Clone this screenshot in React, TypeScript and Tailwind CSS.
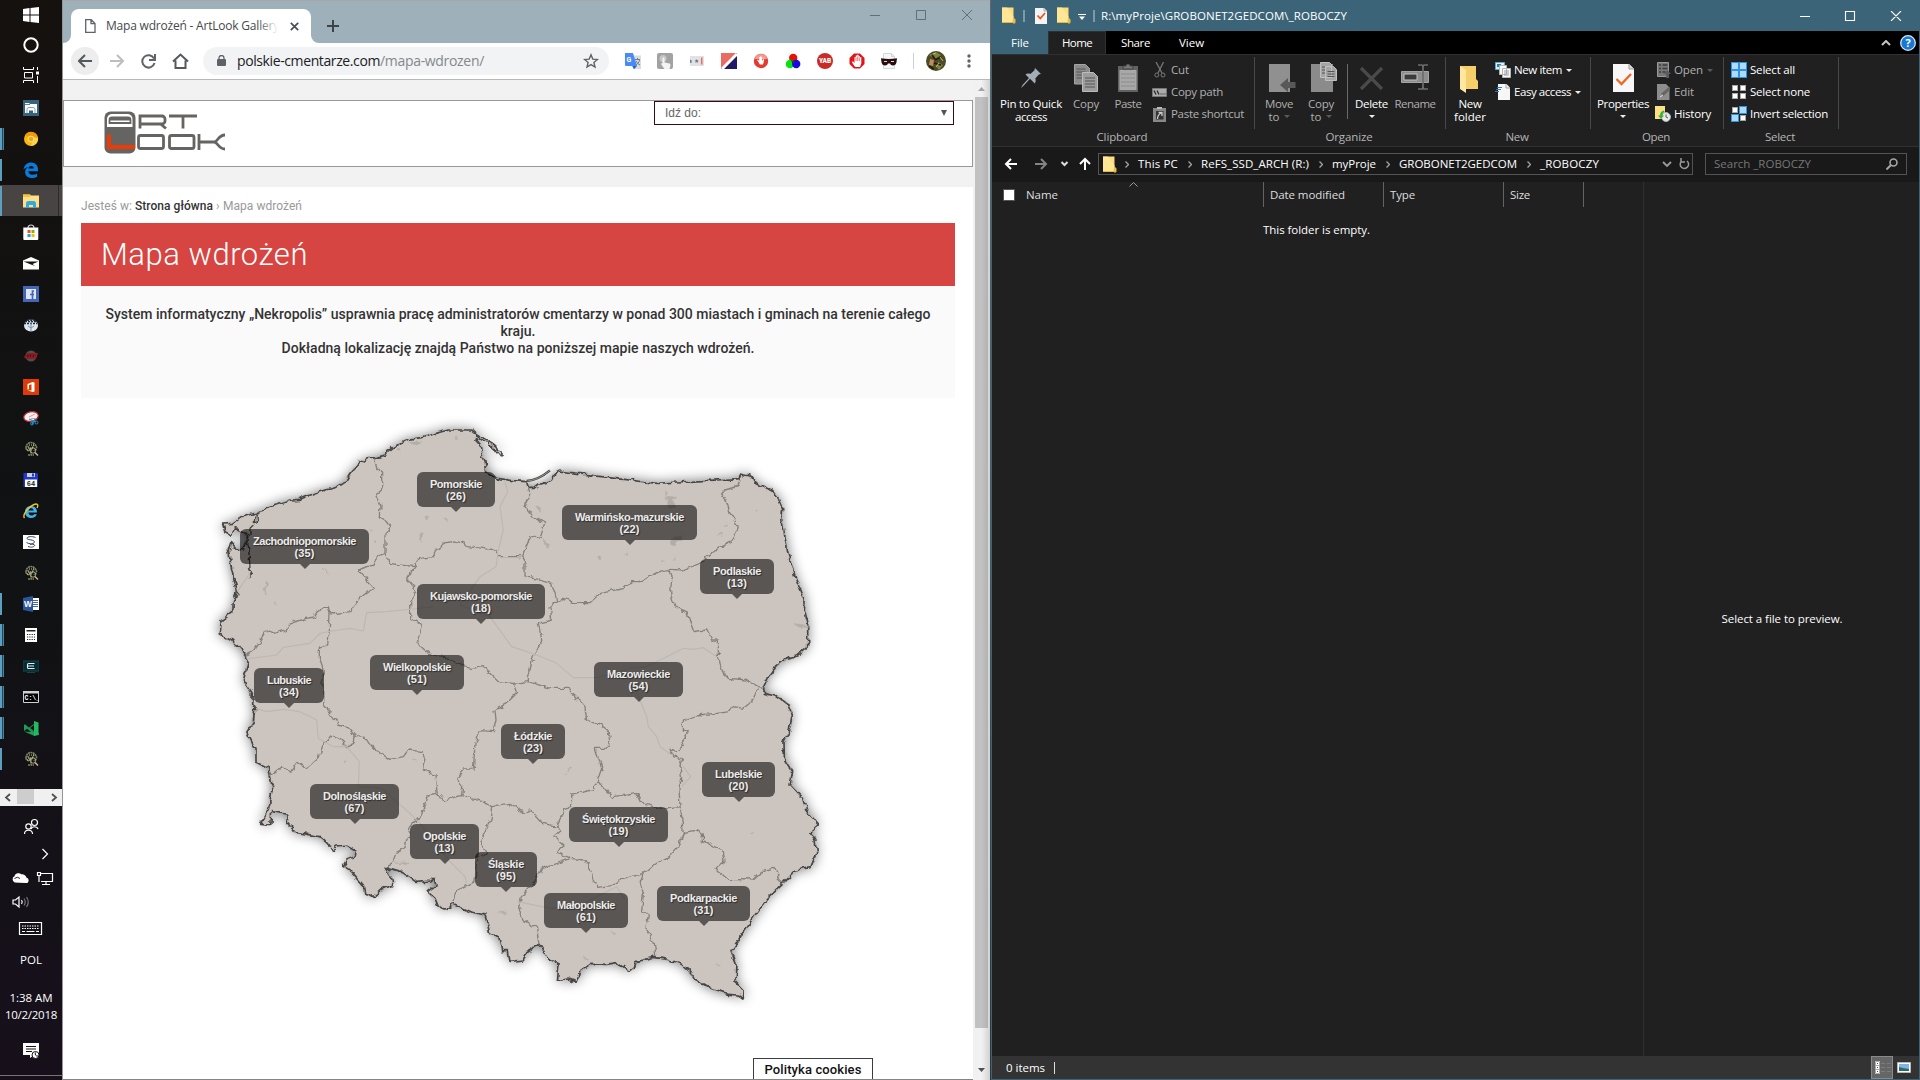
import { useLayoutEffect, useRef, type ReactNode } from "react";

/* Text whose tracking is adjusted so that it spans exactly `w` pixels. */
function Fit({ w, children, className = "" }: { w: number; children: string; className?: string }) {
  const ref = useRef<HTMLSpanElement>(null);
  useLayoutEffect(() => {
    const el = ref.current;
    if (!el) return;
    el.style.letterSpacing = "0px";
    const natural = el.getBoundingClientRect().width;
    el.style.letterSpacing = `${(w - natural) / children.length}px`;
  }, [w, children]);
  return (
    <span ref={ref} className={`inline-block whitespace-pre ${className}`}>
      {children}
    </span>
  );
}

/* ------------------------------------------------------------------ */
/* Taskbar                                                             */
/* ------------------------------------------------------------------ */

function Svg({ s = 16, children, className = "" }: { s?: number; children: ReactNode; className?: string }) {
  return (
    <svg width={s} height={s} viewBox="0 0 16 16" className={`block shrink-0 ${className}`} fill="none">
      {children}
    </svg>
  );
}

const TreeIcon = () => (
  <Svg>
    <path d="M3 7C3 3 6 1.500 8 1.500s6 2 5.500 6c-1 2-2 1.500-2.500 2.500M3 7c0 2 2 3 4 2.500M4.500 5l3.500 4 3-5M8 8v5.500M5 14h6" stroke="#7f8560" strokeWidth="1.600" strokeDasharray="2 .5" />
    <path d="M5 7h5M6 4h5M4 9h3" stroke="#d8cfa4" strokeWidth="1" strokeDasharray="1 1" />
    <circle cx="10" cy="9.500" r="2.700" stroke="#b4b294" strokeWidth=".9" />
    <path d="M12 11.500l3 3" stroke="#d2b08c" strokeWidth="1.500" />
  </Svg>
);

const taskIcons: { icon: ReactNode; run?: 1 | 2; active?: boolean }[] = [
  {
    icon: (
      <Svg>
        <path d="M0 0h16v16H0z" fill="#36647c" />
        <path d="M2 3.500V3h4l1 1h7v9H2z" fill="#fff" />
        <path d="M2 4.500h5" stroke="#36647c" strokeWidth=".8" />
        <path d="M4 13V9.500a2 2 0 0 1 2-2h4a2 2 0 0 1 2 2V13" stroke="#7ba4b8" />
        <path d="M6 13v-2.500h4V13z" fill="#36647c" />
      </Svg>
    ),
  },
  {
    run: 2,
    icon: (
      <Svg>
        <circle cx="8" cy="8" r="7" fill="#f8b70c" />
        <path d="M8 8L2 4.300A7 7 0 0 1 15 7z" fill="#f29a05" />
        <path d="M8 15a7 7 0 0 0 7-8l-5-1z" fill="#ffd04a" />
        <circle cx="8" cy="8" r="3.300" fill="#ffdf7e" />
        <circle cx="8" cy="8" r="2.300" fill="#eda51c" />
      </Svg>
    ),
  },
  {
    run: 1,
    icon: (
      <Svg>
        <path d="M.5 7.500C1.200 3 4.300.5 8 .5c4.500 0 7 3 7 7V9.200H5.300c.2 2.500 2.200 3.600 4.500 3.600 1.700 0 3-.4 4.300-1.200v3.200c-1.500.9-3.200 1.200-5 1.200-4.300 0-7-2.300-7-6 0-2.200 1.200-4 3.200-5C3.800 5.200 2 5.800.5 7.500zM5.400 6.500h5.400C10.800 4.800 9.900 4 8.200 4 6.700 4 5.700 5 5.400 6.500z" fill="#0a7bdb" />
      </Svg>
    ),
  },
  {
    run: 1,
    active: true,
    icon: (
      <Svg>
        <path d="M0 1.500h7l1 1h8v12H0z" fill="#ffe08a" />
        <path d="M0 1.500h6.500L8 3 6.500 4H0z" fill="#f4c430" />
        <path d="M3 15V10.500A2.500 2.500 0 0 1 5.500 8h5A2.500 2.500 0 0 1 13 10.500V15h-3v-3H6v3z" fill="#30aadf" />
      </Svg>
    ),
  },
  {
    icon: (
      <Svg>
        <path d="M5 4c0-4 6-4 6 0" stroke="#cfcfcf" strokeWidth="1.200" />
        <path d="M.3 3.500h15V15a1 1 0 0 1-1 1h-13a1 1 0 0 1-1-1z" fill="#fff" />
        <path d="M4.500 6H7.500v3h-3z" fill="#f04e23" />
        <path d="M8.500 6h3v3h-3z" fill="#7fba00" />
        <path d="M4.500 10h3v3h-3z" fill="#0aa4ef" />
        <path d="M8.500 10h3v3h-3z" fill="#ffb900" />
      </Svg>
    ),
  },
  {
    icon: (
      <Svg>
        <path d="M0 5.500L8 2l8 3.500V14.500H0z" fill="#fff" />
        <path d="M.5 6.500h15l-6 2.500L12 11 8 9.500z" fill="#141414" />
      </Svg>
    ),
  },
  {
    icon: (
      <Svg>
        <path d="M0 0h16v16H0z" fill="#4566b4" />
        <path d="M3 3h10v10H3z" fill="#dfe6f5" />
        <path d="M11 5H9.500v8M7 8.500h4" stroke="#4566b4" strokeWidth="1.700" />
      </Svg>
    ),
  },
  {
    icon: (
      <Svg>
        <ellipse cx="8" cy="8.500" rx="7" ry="6" fill="#dfe7ee" />
        <path d="M1 6.500h13M2 4.500h12M4 3h8" stroke="#1b2b3b" strokeWidth="1.300" strokeDasharray="2 1" />
        <path d="M8 6v8M5 9l3 2 3-2" stroke="#7a92ab" />
      </Svg>
    ),
  },
  {
    icon: (
      <Svg>
        <circle cx="8" cy="8" r="5.500" fill="#4a5050" />
        <path d="M1 9l3-4h11l-2 6H3z" fill="#8e1c22" />
        <path d="M4 9l2-2.500M7 9l1-2.500M10 9l1-2.500" stroke="#4c1214" strokeWidth="1.200" />
      </Svg>
    ),
  },
  {
    icon: (
      <Svg>
        <path d="M0 0h16v16H0z" fill="#dc3b05" />
        <path d="M4.500 5l5-2 2 .6v8.800l-2 .6-5-1.700 4 .3V5.300l-2.500.6v4l-1.500.8z" fill="#fff" />
      </Svg>
    ),
  },
  {
    icon: (
      <Svg>
        <ellipse cx="8" cy="6.500" rx="7.300" ry="4.800" fill="#f2f2f2" stroke="#c2282d" strokeWidth="1.200" transform="rotate(-12 8 6.500)" />
        <path d="M6 7l6-3M8 8.500h5" stroke="#d99" />
        <path d="M6 9l7 3M9 14l3-5" stroke="#2d8fc9" strokeWidth="1.300" />
        <circle cx="9" cy="13.500" r="1.500" stroke="#2d8fc9" />
        <circle cx="13.500" cy="12.500" r="1.500" stroke="#2d8fc9" />
      </Svg>
    ),
  },
  { icon: <TreeIcon /> },
  {
    icon: (
      <Svg>
        <path d="M.5 1h13.500l1 1v13H.5z" fill="#2339c6" />
        <path d="M4 1h8v4H4z" fill="#c8cde8" />
        <path d="M9 1.500h2v3H9z" fill="#2339c6" />
        <path d="M2 7.500h12V15H2z" fill="#fff" />
        <text x="8" y="13.700" fontSize="7" fontWeight="700" fontFamily="Liberation Mono" textAnchor="middle" fill="#222">64</text>
      </Svg>
    ),
  },
  {
    icon: (
      <Svg>
        <path d="M2 9C2 5 4.500 3 8 3s6 2 6 6.500H5.500c0 2 1.300 3 3 3 1.200 0 2-.5 2.500-1.300h2.800C13 13.700 11 15 8.300 15 4.500 15 2 12.500 2 9zm3.600-1.500h5C10.500 6 9.500 5.300 8.200 5.300S5.900 6 5.600 7.500z" fill="#45b2ea" />
        <path d="M1.500 15C-1 12 5 4 11 1.500c3-1.200 5 0 3 3.500" stroke="#f5c21e" strokeWidth="1.400" />
      </Svg>
    ),
  },
  {
    icon: (
      <Svg>
        <path d="M0 1h16v14H0z" fill="#fff" />
        <path d="M12.500 3.500C9 2 4.500 2.500 4 4.200 3.500 6 9.500 5.500 11 7s-1 3-4 3.500M3.500 8.500C5 10 10 9.500 11.500 11c1 1.500-3 3-6.500 1.500" stroke="#2d4766" />
      </Svg>
    ),
  },
  { icon: <TreeIcon /> },
  {
    run: 1,
    icon: (
      <Svg>
        <path d="M8 2h8v12H8z" fill="#fff" />
        <path d="M10 4.500h5M10 6.500h5M10 8.500h5M10 10.500h5" stroke="#2b579a" strokeWidth=".9" />
        <path d="M0 2l10-2v16L0 14z" fill="#2b579a" />
        <text x="5" y="11" fontSize="8.500" fontWeight="700" fontFamily="Liberation Sans" textAnchor="middle" fill="#fff">W</text>
      </Svg>
    ),
  },
  {
    run: 2,
    icon: (
      <Svg>
        <path d="M2 1h12v14H2z" fill="#fff" />
        <path d="M3.500 3h9v1.500h-9z" fill="#222" />
        <path d="M4 7.500h8M4 10h8M4 12.500h8" stroke="#222" strokeWidth="1.200" strokeDasharray="1.200 1.100" />
      </Svg>
    ),
  },
  {
    run: 2,
    icon: (
      <Svg>
        <path d="M0 3h16v10H0z" fill="#082c33" stroke="#134650" strokeWidth="1" />
        <path d="M11.500 5.500h-6A1 1 0 0 0 4.500 6.500v3a1 1 0 0 0 1 1h6M5 8h6" stroke="#dfeef0" strokeWidth="1.100" />
        <path d="M4 14.500h8" stroke="#134650" />
      </Svg>
    ),
  },
  {
    run: 2,
    icon: (
      <Svg>
        <path d="M.5 2.500h15v11H.5z" fill="#000" stroke="#cfcfcf" />
        <path d="M0 2h16v2.500H0z" fill="#cfcfcf" />
        <text x="1.500" y="11" fontSize="6.500" fontWeight="700" fontFamily="Liberation Mono" fill="#fff">C:\_</text>
      </Svg>
    ),
  },
  {
    run: 2,
    icon: (
      <Svg>
        <path d="M1 5l1-.7 9.500 8.200L16 13v2L11.500 16 1 11.500l7 .5-7-6z" fill="#1f9d55" />
        <path d="M11 1l4.500 1.500V14L11 16z" fill="#26b763" />
        <path d="M1 5l4 3-4 3zM11 4v8L5.500 8z" fill="#1f9d55" />
        <path d="M11 5v6L7 8z" fill="#12161a" />
      </Svg>
    ),
  },
  { run: 1, icon: <TreeIcon /> },
];

function Taskbar() {
  return (
    <div className="flex h-full w-[63px] shrink-0 flex-col border-r border-[#969696] bg-gradient-to-b from-[#15110f] via-[#101213] to-[#17101b] font-['Open_Sans',sans-serif] text-white">
      <div className="flex h-[92px] flex-col items-center">
        <div className="flex h-[30px] items-center">
          <Svg>
            <path d="M0 2l6.500-1v6.500H0zM7.500.9L16 0v7.500H7.500zM0 8.500h6.500V15L0 14zM7.500 8.500H16V16l-8.500-1z" fill="#fff" />
          </Svg>
        </div>
        <div className="flex h-[30px] items-center">
          <Svg>
            <circle cx="8" cy="8" r="6.700" stroke="#fff" strokeWidth="2" />
          </Svg>
        </div>
        <div className="flex h-[29px] items-center">
          <Svg>
            <path d="M.5 0v2.500h10V0M.5 16v-2.500h10V16M1.500 5.500h8v5.500h-8zM14.500 0v3M14.500 9v7" stroke="#fff" />
            <path d="M13 4.500h3V7.500h-3z" fill="#fff" />
          </Svg>
        </div>
      </div>
      {taskIcons.map((t, i) => (
        <div key={i} className={t.active ? "flex h-[31px] items-center bg-[#484444]" : "flex h-[31px] items-center"}>
          <div className="flex w-[23px]">
            {t.run && <div className={t.active ? "h-[30px] w-[2px] bg-[#5c9fc0]" : "h-[22px] w-[2px] bg-[#5c9fc0]"} />}
            {t.run === 2 && <div className="h-[22px] w-[2px] border-l border-[#24475a] bg-[#4d809a]" />}
          </div>
          {t.icon}
          {t.active && <div className="ml-[19px] h-[31px] w-px bg-[#2e2b2b]" />}
        </div>
      ))}
      <div className="mt-[15px] flex h-[17px] items-center bg-[#f0f0f0]">
        <svg width="62" height="17" fill="none">
          <path d="M17 0h17v15H17z" fill="#cdcdcd" />
          <path d="M10 5L6 8.500l4 3.500M52 5l4 3.500-4 3.500" stroke="#505050" strokeWidth="1.800" />
        </svg>
      </div>
      <svg width="62" height="140" viewBox="0 806 62 140" fill="none" stroke="#fff" strokeWidth="1.200">
        <circle cx="34.500" cy="822.500" r="3" />
        <path d="M31 829c1-3 6-3 7 0" />
        <circle cx="28.500" cy="826.500" r="2.700" />
        <path d="M24.500 834c0-5 8-5 8 0" />
        <path d="M42.500 849l5 5-5 5" />
        <path d="M15 882a3 3 0 0 1 0-5.500 3.500 3.500 0 0 1 6-1.500 4 4 0 0 1 5 3 2.500 2.500 0 0 1 1 4.500z" fill="#fff" />
        <path d="M14.500 878.500q3-2.500 5.500 0" stroke="#111" strokeWidth=".9" />
        <path d="M41 873.500h11.500v8H41M46 881.500v3M42 884.500h8M37.500 872.500h3v3h-3zM39 876v6" />
        <path d="M13 900h2.500l3.500-3v10l-3.500-3H13z" />
        <path d="M21.500 900q1.500 2 0 4" />
        <path d="M24 898.500q2.500 3.500 0 7M26.500 897q3.500 5 0 10" stroke="#777" />
        <path d="M19.500 922.500h22v12h-22z" />
        <path d="M22 926h17M22 928.500h17" strokeDasharray="1.500 1" />
        <path d="M22 931.500h3M26.500 931.500h8M36 931.500h3" />
      </svg>
      <div className="flex flex-col items-center text-[11.5px] leading-[17px]">
        <div className="mt-[5px] h-[17px]"><Fit w={22}>POL</Fit></div>
        <div className="mt-[21px] h-[17px]"><Fit w={43}>1:38 AM</Fit></div>
        <div className="h-[17px]"><Fit w={52}>10/2/2018</Fit></div>
        <Svg className="mt-[20px]">
          <path d="M0 0h16v12h-5l-4 3v-3H0z" fill="#fff" />
          <path d="M3 3.500h10M3 6h10M3 8.500h6" stroke="#151515" />
          <circle cx="12.500" cy="12" r="3.500" fill="#fff" stroke="#151515" />
          <path d="M12.500 9.500c-1 2 .5 4 2.500 3.500" stroke="#151515" />
        </Svg>
      </div>
      <div className="mt-auto mb-[4px] h-px bg-[#77747a]" />
    </div>
  );
}

/* ------------------------------------------------------------------ */
/* Map of Poland (drawn at three units per pixel)                      */
/* ------------------------------------------------------------------ */

const outline =
  "M68 342L100 340 120 325 178 305 225 285 270 270 300 268 345 250 375 240 410 232 435 215 452 190 475 165 500 147 530 142 555 135 580 112 625 88 670 82 700 72 745 60 815 60 830 72 870 96 893 116 906 133 898 137 885 120 860 98 830 80 828 92 840 105 845 130 855 150 860 185 878 195 890 205 935 212 980 215 985 235 1005 235 1020 222 1055 212 1068 187 1080 183 1130 190 1225 203 1270 208 1345 217 1375 220 1430 216 1530 211 1618 206 1622 192 1650 198 1665 220 1695 235 1715 242 1735 265 1748 295 1745 330 1755 380 1765 435 1785 500 1815 570 1813 600 1823 635 1823 710 1790 738 1760 745 1730 768 1705 800 1690 832 1693 850 1725 858 1765 885 1777 915 1768 960 1752 995 1753 1045 1778 1085 1770 1122 1810 1165 1820 1200 1855 1245 1830 1265 1845 1290 1850 1330 1833 1373 1785 1380 1750 1418 1700 1465 1645 1545 1593 1622 1608 1660 1605 1715 1632 1742 1633 1767 1615 1755 1585 1753 1540 1740 1480 1705 1470 1685 1445 1663 1405 1648 1360 1642 1310 1655 1302 1672 1285 1683 1250 1658 1220 1663 1175 1660 1140 1685 1128 1717 1105 1707 1072 1712 1077 1660 1045 1645 1017 1603 980 1625 970 1653 930 1657 925 1622 905 1622 897 1580 870 1572 855 1515 810 1505 760 1482 735 1500 715 1490 705 1465 682 1445 708 1425 702 1402 690 1413 650 1417 605 1385 553 1370 575 1405 578 1427 545 1437 518 1463 495 1450 490 1425 455 1385 430 1367 440 1350 465 1340 470 1322 440 1305 410 1308 397 1320 385 1300 362 1280 285 1267 263 1240 260 1212 215 1205 212 1247 182 1243 205 1200 218 1130 205 1075 165 1055 165 1015 140 965 160 935 165 895 155 880 157 850 130 810 145 760 135 733 100 695 58 672 60 635 98 605 100 580 112 545 95 480 85 420 92 398 105 415 130 420 136 400 140 372 108 357 95 378 75 368Z";

const borders = [
  "M524 147L530 175 545 190 545 240 527 255 540 290 538 320 555 330 570 350 555 365 555 430 530 440 520 465 475 480 500 510 520 532 485 560 460 590 450 605 390 612 385 590 365 590 345 620 305 630 270 640 265 655 225 670 200 660 180 690 165 720 137 733",
  "M390 612L388 660 383 705 358 712 358 745 370 780 368 885 390 905 415 945 450 955 465 975 463 997 440 1010 420 990 392 975 365 1010 355 1042 320 1075 290 1055 270 1085 245 1072 210 1100",
  "M465 980L495 982 515 1012 570 1048 610 1040 625 1020 665 1025 678 1045 670 1080 705 1095 712 1153 725 1155 735 1172 782 1157 850 1175 875 1190 870 1230 850 1270 845 1300 862 1330 830 1345 825 1415 770 1440 762 1475",
  "M555 430L570 460 600 465 645 470 660 445 700 440 710 415 735 398 770 393 805 410 850 415 890 420 893 440 965 440 975 460 975 500 1000 505 1055 520 1068 560 1070 575",
  "M985 235L990 255 975 290 1000 320 1035 340 1020 385 990 378 970 430 965 440",
  "M645 470L620 508 650 545 632 570 632 625 665 645 650 690 665 715 690 735 740 740 790 770 815 775 850 770 895 815 940 820 985 815",
  "M1070 575L1090 565 1120 577 1170 578 1200 550 1270 535 1290 515 1320 515 1370 488 1405 478 1450 480 1500 460 1560 410 1600 390 1615 350 1590 310 1580 275 1562 255 1575 240 1615 228 1620 206",
  "M1070 575L1050 590 1055 630 1015 640 1025 690 1000 740 985 800 985 815 1050 835 1100 835 1125 855 1155 890 1160 935 1200 945 1225 965 1230 1000 1215 1015 1185 1015 1205 1075 1193 1110 1205 1125 1235 1160 1285 1155 1310 1150 1325 1180 1380 1195 1440 1190",
  "M1402 478L1415 510 1412 550 1425 590 1460 605 1480 665 1520 660 1535 690 1555 690 1555 740 1570 790 1585 805 1640 810 1675 830 1690 832",
  "M1675 835L1655 875 1630 895 1600 890 1590 905 1550 910 1490 915 1450 930 1450 960 1465 965 1445 990 1450 1010 1430 1025 1410 1015 1420 1040 1445 1045 1440 1070 1445 1110 1437 1130 1440 1190 1445 1220 1450 1270 1440 1300 1405 1340 1370 1360 1330 1390 1260 1410 1235 1430 1190 1435 1170 1380 1155 1350 1110 1345 1070 1360 1025 1375 1005 1420 985 1435 960 1465 955 1500 970 1530 1010 1555 1017 1603",
  "M940 820L950 850 920 880 885 900 888 930 880 965 840 962 825 1000 820 1080 790 1080 770 1105 785 1130 782 1157",
  "M712 1153L680 1158 665 1215 640 1240 620 1290 615 1315 590 1330 580 1355 553 1370",
  "M875 1190L930 1183 975 1210 990 1200 1025 1240 1068 1248 1080 1265 1063 1280 1092 1305 1075 1330 1110 1345",
  "M1193 1110L1180 1135 1115 1153 1115 1190 1095 1195 1068 1248",
  "M1330 1390L1320 1415 1330 1450 1325 1500 1345 1515 1338 1555 1350 1570 1365 1620 1367 1642",
  "M1450 1268L1490 1260 1510 1275 1510 1295 1570 1325 1575 1355 1545 1375 1580 1405 1660 1407 1690 1380 1725 1375 1735 1405 1750 1418",
].join("");

const rivers =
  "M915 215L923 245 900 290 910 360 895 420 888 470 840 500 780 585 870 620 935 710 1010 735 1070 760 1120 803 1190 803 1275 780 1320 870 1340 920 1345 950 1370 980 1380 1010 1415 1035M1290 775L1340 770 1400 740 1450 715 1480 718 1510 713 1550 740M168 895L200 905 250 898 300 905 350 930 355 985 400 1010 440 1010 478 1055 475 1130 545 1135 630 1210 660 1240 750 1355 795 1400 800 1420M140 747L230 735 250 712 330 700 360 670 395 663 450 655 490 663 500 608 560 605 640 597 700 590M955 1475L1050 1495 1140 1485 1250 1430 1275 1470M1450 1070L1472 1100 1445 1130M112 545L150 490";

const lakes =
  "M628 98l35-4-15 14zM765 80l4 10-6-2zM588 117l14 3-6 4zM1398 258l30 4-10 10 16 22-28 2zM1410 385l38-8-22 30-16-8zM1575 343l12 3-10 3zM1552 375l10-4 4 8-8-4zM1665 300l6-2v6zM510 360l10 2-8 3zM523 392l10 2-8 4zM470 152l10 2-8 2zM195 518l6-2-5 22 4 18-8-14zM366 474l22 16-14-8zM222 575l12 8-8-4zM896 1508l24-2-8 6zM585 1358l40 2-10 4zM430 1053l6 4-6 2zM638 1048l8 2-6 3zM1092 1092l20-20h4l-16 10zM1150 1640l16 10-8-4zM1552 1660l8 4-6 4zM1652 1270l10-6-6 8zM1235 1565l14 3-10 2zM1785 640l40 8-20 2zM1196 440l8 4-6 6zM1386 450l8 4-8 0zM1424 446l6 4-6 0zM1276 432l6-4v8zM660 370l8 4-4 24-4-10zM735 325l5 2-2 8zM680 318l8 2-6 4zM1008 290l14 4-2 14zM1026 385l22 20-4 14zM1395 245l8 3-5 5z";

const regions: [string, number, number, number, number, number][] = [
  ["Pomorskie", 26, 217, 62, 78, 52],
  ["Zachodniopomorskie", 35, 40, 119, 129, 103],
  ["Kujawsko-pomorskie", 18, 217, 174, 128, 102],
  ["Warmińsko-mazurskie", 22, 362, 95, 135, 109],
  ["Podlaskie", 13, 500, 149, 74, 48],
  ["Wielkopolskie", 51, 170, 245, 94, 68],
  ["Lubuskie", 34, 54, 258, 70, 44],
  ["Mazowieckie", 54, 394, 252, 89, 63],
  ["Łódzkie", 23, 301, 314, 64, 38],
  ["Lubelskie", 20, 502, 352, 73, 47],
  ["Dolnośląskie", 67, 110, 374, 89, 63],
  ["Opolskie", 13, 210, 414, 69, 43],
  ["Śląskie", 95, 275, 442, 62, 36],
  ["Świętokrzyskie", 19, 369, 397, 99, 73],
  ["Małopolskie", 61, 344, 483, 84, 58],
  ["Podkarpackie", 31, 457, 476, 93, 67],
];

function PolandMap() {
  return (
    <div className="relative ml-[137px] h-[610px] w-[640px]">
      <svg width="640" height="610" viewBox="0 0 1920 1830" fill="none" strokeLinejoin="round" className="block">
        <defs>
          <filter id="soft" x="-10%" y="-10%" width="120%" height="120%">
            <feGaussianBlur stdDeviation="19" />
          </filter>
          <filter id="rough" x="-2%" y="-2%" width="104%" height="104%" colorInterpolationFilters="sRGB">
            <feTurbulence type="fractalNoise" baseFrequency="0.045" numOctaves="2" seed="4" />
            <feDisplacementMap in="SourceGraphic" scale="20" xChannelSelector="R" yChannelSelector="G" />
          </filter>
        </defs>
        <path d={outline} fill="#000" opacity=".55" filter="url(#soft)" />
        <g filter="url(#rough)">
          <path d={outline} fill="#ccc5bf" stroke="#484644" strokeWidth="5" />
          <path d={lakes} fill="#b3ada7" stroke="#b3ada7" strokeWidth="1.500" />
          <path d={borders} stroke="#85817c" strokeWidth="4" />
          <path d="M178 308L165 320 163 338 173 335 170 318M160 345L150 355 150 370 142 385 140 405 146 425 148 440 150 475 145 480 158 488 148 495 152 503M105 353l10 2v6h-8z" stroke="#484644" strokeWidth="4" />
        </g>
        <path d={rivers} stroke="#bdb7b1" strokeWidth="3.500" />
        <path d="M980 213Q1015 210 1050 181" stroke="#44423f" strokeWidth="7" />
        <path d="M982 213Q1015 210 1050 181" stroke="#a9a39d" strokeWidth="2.500" />
      </svg>
      {regions.map(([name, n, x, y, w, tw]) => (
        <div
          key={name}
          style={{ left: x, top: y, width: w }}
          className="absolute flex h-[35px] flex-col items-center rounded-[6px] bg-[#000000]/56 pt-[6px] font-['Liberation_Sans',sans-serif] text-[11px] leading-[12px] font-bold text-[#ececec] [text-shadow:1px_1px_1px_rgba(0,0,0,0.5)]"
        >
          <Fit w={tw}>{name}</Fit>
          <Fit w={20}>{`(${n})`}</Fit>
          <span className="absolute top-[35px] h-0 w-0 border-x-[5px] border-t-[5px] border-x-transparent border-t-black/56" />
        </div>
      ))}
    </div>
  );
}

/* ------------------------------------------------------------------ */
/* Browser window                                                      */
/* ------------------------------------------------------------------ */

const extensions: ReactNode[] = [
  <Svg key="translate">
    <path d="M5 2.500h11V16H8z" fill="#dadce0" />
    <path d="M0 0h8l4 13-3 3-1.500-3H1a1 1 0 0 1-1-1z" fill="#4a8af4" />
    <path d="M7.500 13h4l-2.500 3z" fill="#2b5fc4" />
    <text x="1.600" y="9" fontSize="7" fontWeight="700" fontFamily="Roboto" fill="#fff">G</text>
    <path d="M10 6.500h5M12.500 5v1.500M14.500 7c-.5 2.500-2 4-3.500 5M11 8c1 2 2 3 4 4" stroke="#66818c" />
  </Svg>,
  <Svg key="touch">
    <rect width="16" height="16" rx="2" fill="#a2a2a2" />
    <circle cx="6" cy="5.500" r="3.500" fill="#c6c6c6" />
    <path d="M5.500 5.500c0-1.300 2-1.300 2 0v4l5 1c1 .3 1 1 .9 2L12.500 16h-5L4 11c0-1 1-1 1.500-.5z" fill="#f4f4f4" />
  </Svg>,
  <Svg key="pass">
    <path d="M1 3h14v10H1z" fill="#e2e2e2" />
    <path d="M1 6.700h1l.3 1h1l-.8.800.3 1.300H1zM7.700 6l.6 1.300 1.500.1-1.100 1 .3 1.500-1.300-.8-1.300.8.300-1.500-1.100-1 1.500-.1z" fill="#5f7f8d" />
    <path d="M12.700 4.500v7" stroke="#f1666a" strokeWidth="1.500" />
  </Svg>,
  <Svg key="flag">
    <path d="M0 0h16L0 16z" fill="#ea6b61" />
    <path d="M16 0v16H0z" fill="#201a66" />
    <path d="M16 1L1 16" stroke="#fff" strokeWidth="3" />
  </Svg>,
  <Svg key="hand">
    <circle cx="8" cy="8" r="7.200" fill="#e43a31" />
    <path d="M2 6a6 5 0 0 1 12 0z" fill="#f49a90" />
    <path d="M5.500 9L4 7l1-.5L6.200 8V4h1v3V3.300h1V7V4h1v4l1.300-2 .8.500L10 11.500H6.800z" fill="#fff" />
  </Svg>,
  <Svg key="rgb">
    <circle cx="8.200" cy="5" r="4.200" fill="#e51400" />
    <circle cx="5" cy="11" r="4.300" fill="#08e413" />
    <circle cx="11.200" cy="11" r="4.200" fill="#1809e2" />
    <path d="M5.500 7l2.700 1 2-.2-2 3z" fill="#145" />
  </Svg>,
  <Svg key="yab">
    <circle cx="8" cy="8" r="8" fill="#c82c25" />
    <text x="8" y="10.300" fontSize="6.500" fontWeight="900" fontFamily="Roboto" textAnchor="middle" fill="#fff">YAB</text>
  </Svg>,
  <Svg key="abp">
    <path d="M5 .5h6L15.500 5v6L11 15.500H5L.5 11V5z" fill="#e4131b" />
    <path d="M5.300 13L2.800 9l1.200-.8L5.500 10V4h1.300V2.600h1.400V1.800h1.400v1.400H11v1h1.300V10.500l-1.300 3.500H6.500z" fill="#fff" />
    <path d="M7 4.500V8M8.700 3.500V8M10.300 4.500V8" stroke="#e4131b" strokeWidth=".6" />
  </Svg>,
  <Svg key="mask">
    <path d="M2.500.5H10.500l3 3v12H2.500z" fill="#f4f6f7" stroke="#d3d8dc" />
    <path d="M10.500.5v3h3" stroke="#cfd4d8" />
    <path d="M0 5.200q8 1.600 16 0l-.5 4q-.8 3.300-3.500 3.300-2.500 0-3-2H7q-.5 2-3 2-2.700 0-3.500-3.300z" fill="#2a0d10" />
    <path d="M3 8.500h3M10 8.500h3" stroke="#e9dada" strokeWidth="1.200" />
  </Svg>,
];

function Browser() {
  return (
    <div className="flex h-full w-[927px] shrink-0 flex-col bg-white">
      <div className="flex h-[43px] shrink-0 border-t border-[#a8a6a8] bg-[#9eb1ba]">
        <div className="relative mt-[8px] ml-[8px] flex h-[34px] w-[240px] items-center rounded-t-[8px] bg-white">
          <svg width="8" height="8" className="absolute bottom-0 -left-[8px]"><path d="M8 0v8H0a8 8 0 0 0 8-8z" fill="#fff" /></svg>
          <svg width="8" height="8" className="absolute -right-[8px] bottom-0"><path d="M0 0v8h8a8 8 0 0 1-8-8z" fill="#fff" /></svg>
          <svg width="11" height="14" viewBox="0 0 11 14" className="ml-[14px] block" fill="none">
            <path d="M.7.700h5.500L10 4.500v8.800H.7zM6 .7v4h4" stroke="#5f6368" strokeWidth="1.300" />
          </svg>
          <div className="relative ml-[10px] w-[172px] overflow-hidden font-['Open_Sans',sans-serif] text-[12px] leading-[18px] text-[#45494d]">
            <Fit w={173}>Mapa wdrożeń - ArtLook Gallery</Fit>
            <div className="absolute top-0 right-0 h-full w-[20px] bg-gradient-to-r from-white/0 to-white" />
          </div>
          <svg width="9" height="9" viewBox="0 0 9 9" className="ml-[12px]"><path d="M.8.8l7.400 7.400M8.200.8L.8 8.200" stroke="#4a4f54" strokeWidth="1.700" /></svg>
        </div>
        <svg width="12" height="12" className="mt-[19px] ml-[16px]"><path d="M6 0v12M0 6h12" stroke="#3c4449" strokeWidth="2" /></svg>
        <svg width="102" height="10" className="mt-[9px] mr-[18px] ml-auto" fill="none">
          <path d="M0 5.500h10M46.500.5h9v9h-9zM92 0l10 10M102 0L92 10" stroke="#626f76" />
        </svg>
      </div>
      <div className="flex h-[37px] shrink-0 items-center border-b border-[#b8b8b8] bg-white">
        <div className="ml-[8px] flex h-[28px] w-[28px] items-center justify-center rounded-full bg-[#ededed]">
          <svg width="14" height="14" fill="none"><path d="M14 7H1.500M7 1L1 7l6 6" stroke="#55595e" strokeWidth="2" /></svg>
        </div>
        <svg width="14" height="14" className="ml-[11px]" fill="none"><path d="M0 7h12.500M7 1l6 6-6 6" stroke="#bcbec0" strokeWidth="2" /></svg>
        <svg width="15" height="15" className="ml-[17px]" fill="none"><path d="M13 4.500A6.200 6.200 0 1 0 13.500 9M14 0v6H8" stroke="#5f6368" strokeWidth="2" /></svg>
        <svg width="17" height="16" className="ml-[16px]" fill="none"><path d="M1 8.500l7.500-7 7.500 7M3.500 7.500V15h10V7.500" stroke="#55595e" strokeWidth="2" /></svg>
        <div className="ml-[14px] flex h-[28px] w-[406px] items-center rounded-full bg-[#f1f3f4]">
          <svg width="9" height="12" className="ml-[14px]" fill="none"><rect y="4" width="9" height="7" rx="1" fill="#5f6368" /><path d="M2 4.500V3a2.500 2.500 0 0 1 5 0v1.500" stroke="#5f6368" strokeWidth="1.300" /></svg>
          <div className="ml-[11px] font-['Open_Sans',sans-serif] text-[14px] leading-[20px]">
            <Fit w={143} className="text-[#202124]">polskie-cmentarze.com</Fit>
            <Fit w={104} className="text-[#84888c]">/mapa-wdrozen/</Fit>
          </div>
          <svg width="16" height="16" viewBox="0 0 16 16" className="mr-[10px] ml-auto" fill="none"><path d="M8 1.800l1.800 4.300 4.600.4-3.500 3 1.100 4.500L8 11.600 4 14l1.100-4.500-3.500-3 4.600-.4z" stroke="#5f6368" strokeWidth="1.400" /></svg>
        </div>
        <div className="ml-[16px] flex gap-[16px]">{extensions}</div>
        <div className="ml-[16px] h-[16px] w-px bg-[#cfcfcf]" />
        <svg width="20" height="20" viewBox="0 0 20 20" className="ml-[12px]" fill="none">
          <circle cx="10" cy="10" r="10" fill="#4d4a26" />
          <path d="M3 4l7-3 5 3-6 4zM12 11l5 3-4 5-3-4z" fill="#82823f" />
          <path d="M4 8l4 1-1 6-4-1z" fill="#c28c59" />
          <path d="M9 9l6-3M8 12l7 2M3 15l5 3M6 4l3 4" stroke="#231c10" strokeWidth="1.800" />
          <path d="M14 6l3 4M7 3l3-1M10 16l3-4" stroke="#aebf7a" />
        </svg>
        <svg width="4" height="14" className="ml-[21px]"><circle cx="2" cy="2" r="1.700" fill="#5f6368" /><circle cx="2" cy="7" r="1.700" fill="#5f6368" /><circle cx="2" cy="12" r="1.700" fill="#5f6368" /></svg>
      </div>
      <div className="flex h-[1000px] min-h-0">
        <div className="relative flex w-[910px] flex-col overflow-hidden">
          <div className="h-[107px] shrink-0 bg-[#f2f2f2] pt-[20px]">
            <div className="flex h-[67px] border border-[#999] bg-white">
              <svg width="124" height="44" viewBox="0 0 124 44" className="mt-[9px] ml-[39px]" fill="none">
                <rect x="1.500" y="1.500" width="31" height="42" rx="6" fill="#666463" />
                <path d="M4 17V9a5 5 0 0 1 5-5h15.500a5 5 0 0 1 5 5v8z" fill="#fff" />
                <path d="M6.500 14V10a2.500 2.500 0 0 1 2.500-2.500h16a2.500 2.500 0 0 1 2.500 2.500v4M7 9.500h20" stroke="#666463" strokeWidth="1.800" />
                <path d="M6 13h21.500" stroke="#666463" strokeWidth="2" />
                <path d="M6 24.500v12.500h26" stroke="#ee3b06" strokeWidth="4" />
                <path d="M37 18.500V6h22a3 3 0 0 1 3 3v2a3 3 0 0 1-3 3H37M57 13.500l6 5M66 6h28M80 6v12.500" stroke="#666463" strokeWidth="2.800" />
                <rect x="35.500" y="25.500" width="25" height="13" rx="2" stroke="#666463" strokeWidth="2.800" />
                <rect x="66.500" y="25.500" width="24.500" height="13" rx="2" stroke="#666463" strokeWidth="2.800" />
                <path d="M96 24v16M96 32h15c4 0 4-7 11-7M111 32c4 0 4 7 11 7" stroke="#666463" strokeWidth="2.800" />
              </svg>
              <div className="mr-[18px] ml-auto flex h-[24px] w-[300px] items-center border border-[#350a10] bg-white pl-[10px] font-['Liberation_Sans',sans-serif] text-[12px] text-[#666]">
                <Fit w={36}>Idź do:</Fit>
                <svg width="6" height="6" className="mr-[6px] ml-auto"><path d="M0 0h6L3 6z" fill="#555" /></svg>
              </div>
            </div>
          </div>
          <div className="ml-[18px] flex h-[36px] w-[874px] shrink-0 items-center gap-[3px] pt-[2px] font-['Roboto',sans-serif] text-[12px] text-[#999]">
            <Fit w={51}>Jesteś w:</Fit>
            <Fit w={78} className="font-medium text-[#333]">Strona główna</Fit>
            <Fit w={4}>›</Fit>
            <Fit w={79}>Mapa wdrożeń</Fit>
          </div>
          <div className="ml-[18px] flex h-[63px] w-[874px] shrink-0 items-center bg-[#d64541] pt-[1px] pl-[20px] font-['Roboto',sans-serif] text-[31px] font-light text-white">
            <Fit w={207}>Mapa wdrożeń</Fit>
          </div>
          <div className="ml-[18px] flex h-[112px] w-[874px] shrink-0 flex-col items-center bg-[#fafafa] pt-[20px] font-['Roboto',sans-serif] text-[14px] leading-[17px] font-medium text-[#333]">
            <Fit w={825}>System informatyczny „Nekropolis” usprawnia pracę administratorów cmentarzy w ponad 300 miastach i gminach na terenie całego</Fit>
            <Fit w={35}>kraju.</Fit>
            <Fit w={473}>Dokładną lokalizację znajdą Państwo na poniższej mapie naszych wdrożeń.</Fit>
          </div>
          <div className="h-[12px] shrink-0" />
          <PolandMap />
          <div className="absolute bottom-[1px] left-[690px] flex h-[21px] w-[120px] items-center justify-center border border-b-0 border-[#3c3c46] bg-white pt-[1px] font-['Roboto',sans-serif] text-[13px] font-medium text-[#111]">
            <Fit w={97}>Polityka cookies</Fit>
          </div>
          <div className="absolute bottom-0 left-0 h-px w-full bg-[#858585]" />
        </div>
        <div className="flex w-[17px] flex-col items-center bg-gradient-to-r from-[#f1f1f1] from-50% to-[#d2d2d2]">
          <svg width="7" height="4" className="mt-[7px]"><path d="M0 4h7L3.500 0z" fill="#a3a3a3" /></svg>
          <div className="mt-[6px] h-[931px] w-[13px] bg-gradient-to-r from-[#c1c1c1] from-50% to-[#b2b2b2]" />
          <svg width="7" height="4" className="mt-[40px]"><path d="M0 0h7L3.500 4z" fill="#505050" /></svg>
        </div>
      </div>
    </div>
  );
}

/* ------------------------------------------------------------------ */
/* File explorer window                                                */
/* ------------------------------------------------------------------ */

const FolderSmall = () => (
  <svg width="14" height="17" viewBox="0 0 14 17" className="block shrink-0">
    <path d="M0 .5h11.500V11l1.500 1.500V16H0z" fill="#fcdc7c" />
    <path d="M0 .5h5l6.500 9V16H0z" fill="#ffe89e" opacity=".8" />
    <path d="M0 15.500h13M11.500 11l1.500 1.500V16h-2z" stroke="#e5b93c" fill="#f3c954" />
  </svg>
);

const Arrow = ({ dim }: { dim?: boolean }) => (
  <svg width="6" height="3" className="block"><path d="M0 0h6L3 3z" fill={dim ? "#5a5a5a" : "#ececec"} /></svg>
);

function Big({
  icon,
  lines,
  box,
  dim,
  arrow,
}: {
  icon: ReactNode;
  lines: [string, number][];
  box: string;
  dim?: boolean;
  arrow?: "inline" | "below";
}) {
  return (
    <div className={`flex shrink-0 flex-col items-center ${box} ${dim ? "text-[#b0b0b0]" : "text-white"}`}>
      <div className="flex h-[42px] items-end justify-center pb-[5px]">{icon}</div>
      {lines.map(([t, w], i) => (
        <div key={t} className="flex h-[13px] items-center gap-[4px] leading-[13px]">
          <Fit w={w}>{t}</Fit>
          {arrow === "inline" && i === lines.length - 1 && <Arrow dim />}
        </div>
      ))}
      {arrow === "below" && <div className="pt-[5px]"><Arrow /></div>}
    </div>
  );
}

function Small({ icon, text, w, dim, arrow }: { icon: ReactNode; text: string; w: number; dim?: boolean; arrow?: boolean }) {
  return (
    <div className={`flex h-[22px] items-center ${dim ? "text-[#b0b0b0]" : "text-white"}`}>
      <div className="flex w-[19px] items-center">{icon}</div>
      <Fit w={w}>{text}</Fit>
      {arrow && <div className="ml-[4px]"><Arrow dim={dim} /></div>}
    </div>
  );
}

function Group({ title, tw, box, children }: { title: string; tw: number; box: string; children: ReactNode }) {
  return (
    <div className={`flex h-full shrink-0 ${box}`}>
      <div className="flex min-w-0 flex-1 flex-col">
        <div className="flex h-[74px]">{children}</div>
        <div className="flex h-[16px] items-center justify-center pr-[2px] text-[#b5b5b5]"><Fit w={tw}>{title}</Fit></div>
      </div>
      <div className="mt-[2px] h-[72px] w-px bg-[#484848]" />
    </div>
  );
}

const Page = ({ check }: { check?: boolean }) => (
  <svg width="12" height="16" viewBox="0 0 12 16" className="block" fill="none">
    <path d="M0 0h9l3 3v13H0z" fill="#f4f4f4" />
    <path d="M9 0v3h3" stroke="#a5a5a5" />
    {check && <path d="M2.500 7.500l2.800 3L10 5" stroke="#f05014" strokeWidth="1.700" />}
  </svg>
);

function Squares({ on }: { on: boolean[] }) {
  return (
    <div className="grid grid-cols-2">
      {on.map((b, i) => (
        <div key={i} className={b ? "h-[8px] w-[8px] border border-[#2f92e6] bg-[#aedafc]" : "m-px h-[6px] w-[6px] border border-[#a8a8a8] bg-white"} />
      ))}
    </div>
  );
}

function Ribbon() {
  return (
    <div className="flex h-[93px] shrink-0 border-t border-b border-[#303030] bg-[#202020] text-[11.5px]">
      <Group title="Clipboard" tw={51} box="w-[263px]">
        <Big
          box="ml-[7px] w-[64px]"
          lines={[["Pin to Quick", 62], ["access", 32]]}
          icon={<svg width="20" height="21" viewBox="0 0 20 21" className="mb-[3px]"><path d="M14 0l6 6-2.200.5-3.500 4c.7 2 .5 3.500-.5 5L9 10.800l-6.500 7L0 20l1.500-3L8 10 4.500 6.500c1.500-1.200 3.200-1 4.800-.5l4-3.600z" fill="#a3adb6" /></svg>}
        />
        <Big
          box="ml-[1px] w-[44px]"
          dim
          lines={[["Copy", 26]]}
          icon={
            <svg width="25" height="28" viewBox="0 0 25 28" fill="none">
              <path d="M.5.500h11l4 4V20H.500z" fill="#8b8b8b" stroke="#a4a4a4" />
              <path d="M2.500 5h9M2.500 8h9M2.500 11h6M2.500 14h6" stroke="#555" />
              <path d="M8.500 8.500h11l4 4V27.500h-15z" fill="#9c9c9c" stroke="#bcbcbc" />
              <path d="M11 14h10M11 17h10M11 20h10M11 23h10" stroke="#555" />
            </svg>
          }
        />
        <Big
          box="w-[40px]"
          dim
          lines={[["Paste", 27]]}
          icon={
            <svg width="20" height="28" viewBox="0 0 20 28" fill="none">
              <path d="M0 2h20v26H0z" fill="#626262" />
              <path d="M1.500 6h17v20h-17z" fill="#a8a8a8" />
              <path d="M3 10h14M3 14h14M3 18h14M3 22h14" stroke="#8c8c8c" />
              <path d="M5 2h3a2 2 0 0 1 4 0h3v3H5z" fill="#777" stroke="#444" />
            </svg>
          }
        />
        <div className="ml-[4px] flex flex-col pt-[4px]">
          <Small dim text="Cut" w={18} icon={<svg width="12" height="16" viewBox="0 0 12 16" className="ml-[2px]" fill="none"><path d="M2 0l6 11M9.500 0L4 11" stroke="#777" strokeWidth="1.300" /><circle cx="2.800" cy="13" r="2" stroke="#777" /><circle cx="9" cy="13" r="2" stroke="#777" /></svg>} />
          <Small dim text="Copy path" w={52} icon={<svg width="15" height="9" viewBox="0 0 15 9" fill="none"><path d="M.5.500h14v8H.500z" fill="#ababab" stroke="#777" /><path d="M2 2.500L4 6.500M5 2.500L7 6.500" stroke="#222" strokeWidth="1.200" /><path d="M8.500 6h5" stroke="#222" strokeDasharray="1 1" strokeWidth="1.200" /></svg>} />
          <Small dim text="Paste shortcut" w={73} icon={<svg width="13" height="15" viewBox="0 0 13 15" className="ml-[1px]" fill="none"><path d="M0 1h13v14H0z" fill="#888" /><path d="M4 0h5v2H4z" fill="#bbb" /><path d="M3 4h7.500v8.500H3z" fill="#333" /><path d="M4.500 12c0-3 1-5 4-6M5.500 5.500H9V9" stroke="#ccc" strokeWidth="1.300" /></svg>} />
        </div>
      </Group>
      <Group title="Organize" tw={47} box="w-[191px]">
        <Big
          box="ml-[3px] w-[42px]"
          dim
          arrow="inline"
          lines={[["Move", 28], ["to", 11]]}
          icon={<svg width="28" height="28" viewBox="0 0 28 28" className="ml-[5px]"><path d="M1 0h21v28H1z" fill="#909090" /><path d="M12 21l8-7v4h7.500v6H20v4z" fill="#585858" /></svg>}
        />
        <Big
          box="w-[42px]"
          dim
          arrow="inline"
          lines={[["Copy", 26], ["to", 11]]}
          icon={
            <svg width="28" height="30" viewBox="0 0 28 30" className="ml-[5px]" fill="none">
              <path d="M1 2h22v28H1z" fill="#8b8b8b" />
              <path d="M10.500.500h9l2 2v13h-11zM15.500 4.500h8l3 3v11h-11z" fill="#a5a5a5" stroke="#c0c0c0" />
              <path d="M17.500 9.500h7M17.500 12h7M17.500 14.500h7M12 5h3M12 8h3M12 11h3" stroke="#555" />
            </svg>
          }
        />
        <div className="mt-[9px] ml-[5px] h-[55px] w-px bg-[#6a6a6a]" />
        <Big
          box="w-[47px]"
          arrow="below"
          lines={[["Delete", 33]]}
          icon={<svg width="25" height="25" viewBox="0 0 25 25" className="mb-[1px]"><path d="M2 2l21 21M23 2L2 23" stroke="#4a4a4a" strokeWidth="3.200" /></svg>}
        />
        <Big
          box="w-[40px]"
          dim
          lines={[["Rename", 41]]}
          icon={<svg width="28" height="27" viewBox="0 0 28 27" className="mb-[1px]" fill="none"><path d="M.5 7.500h27v11H.500z" fill="#8d8d8d" stroke="#a3a3a3" /><path d="M3 10h13v6H3z" fill="#3a3a3a" stroke="#c4c4c4" /><path d="M17 1h3.500q1.500 0 1.500 2v20q0 2-1.500 2H17M27 1h-3.500Q22 1 22 3M27 25h-3.500Q22 25 22 23" stroke="#6e6e6e" strokeWidth="1.700" /></svg>}
        />
      </Group>
      <Group title="New" tw={23} box="w-[145px]">
        <Big
          box="w-[48px]"
          lines={[["New", 23], ["folder", 32]]}
          icon={<svg width="20" height="27" viewBox="0 0 20 27" className="mr-[3px] -mb-[1px]"><path d="M1 0h16v13l2 2v8H1z" fill="#f5cf6a" /><path d="M1 0l6 4v23l-6-4z" fill="#ffe7a0" /></svg>}
        />
        <div className="ml-[1px] flex flex-col pt-[4px]">
          <Small text="New item" w={48} arrow icon={<svg width="16" height="16" viewBox="0 0 16 16" fill="none"><path d="M.5.500h9v7H.500z" fill="#dceefa" stroke="#67a8cd" /><path d="M2 2h4v3H2z" fill="#2f7faa" /><path d="M4.500 3.500h7v9h-7zM7.500 6.500h8v9h-8z" fill="#fafafa" stroke="#b5b5b5" /><path d="M9 9h5M9 11h5M9 13h5" stroke="#9a9aa8" /></svg>} />
          <Small text="Easy access" w={57} arrow icon={<svg width="16" height="16" viewBox="0 0 16 16" fill="none"><path d="M3 0h8.500L15 3.500V16H3z" fill="#f6f6f6" /><path d="M11 0v4h4" stroke="#a5a5a5" /><path d="M2 3.500h5M1 5.500h5M0 7.500h4" stroke="#3378b5" /></svg>} />
        </div>
      </Group>
      <Group title="Open" tw={28} box="w-[133px]">
        <Big
          box="w-[64px]"
          arrow="below"
          lines={[["Properties", 52]]}
          icon={<svg width="21" height="28" viewBox="0 0 21 28" fill="none"><path d="M0 0h16l5 5v23H0z" fill="#f7f7f7" /><path d="M16 0v5h5" stroke="#9a9a9a" fill="#ddd" /><path d="M3.500 15l5 5L18 10" stroke="#f26522" strokeWidth="2.300" /></svg>}
        />
        <div className="flex flex-col pt-[4px]">
          <Small dim arrow text="Open" w={29} icon={<svg width="14" height="16" viewBox="0 0 14 16" className="ml-[2px]" fill="none"><path d="M.5.500h11v14H.500z" fill="#777" stroke="#999" /><path d="M2 3h2M2 6.500h2M2 10h2M5.500 3h5M5.500 6.500h5M5.500 10h3" stroke="#3c3c3c" strokeWidth="1.500" /><path d="M9 16v-4H7l3.500-4L14 12h-2v4z" fill="#5c5c5c" /></svg>} />
          <Small dim text="Edit" w={20} icon={<svg width="13" height="16" viewBox="0 0 13 16" className="ml-[2px]" fill="none"><path d="M0 0h9l3.500 3.500V16H0z" fill="#8d8d8d" /><path d="M5 11l8-7" stroke="#666" strokeWidth="3" /><path d="M3 13l3-2" stroke="#ddd" /></svg>} />
          <Small text="History" w={37} icon={<svg width="16" height="16" viewBox="0 0 16 16" fill="none"><path d="M0 0h10v13H0z" fill="#fbe086" /><circle cx="11" cy="11" r="4.500" fill="#e8eaea" stroke="#a9adb0" /><path d="M11 8.500V11l2 1" stroke="#555" /><path d="M9 4.500C6 5 5 7 5 9.500H3L6 13l3-3.500H7.500C7.500 7.500 8 6.500 9.500 6z" fill="#35b233" /></svg>} />
        </div>
      </Group>
      <Group title="Select" tw={30} box="w-[115px]">
        <div className="ml-[7px] flex flex-col pt-[4px]">
          <Small text="Select all" w={45} icon={<Squares on={[true, true, true, true]} />} />
          <Small text="Select none" w={60} icon={<Squares on={[false, false, false, false]} />} />
          <Small text="Invert selection" w={78} icon={<Squares on={[false, true, true, false]} />} />
        </div>
      </Group>
    </div>
  );
}

const crumbs: [string, number, string][] = [
  ["This PC", 40, "w-[63px]"],
  ["ReFS_SSD_ARCH (R:)", 108, "w-[131px]"],
  ["myProje", 44, "w-[67px]"],
  ["GROBONET2GEDCOM", 118, "w-[141px]"],
  ["_ROBOCZY", 59, "w-[72px]"],
];

const columns: [string, number, string][] = [
  ["Date modified", 75, "w-[120px]"],
  ["Type", 25, "w-[120px]"],
  ["Size", 20, "w-[80px]"],
];

function Explorer() {
  return (
    <div className="flex h-full w-[929px] shrink-0 flex-col border-x border-b border-[#3c6478] bg-[#202020] font-['Open_Sans',sans-serif] text-[11.5px] text-white">
      <div className="flex h-[31px] shrink-0 items-center bg-[#3c6478]">
        <div className="ml-[10px]"><FolderSmall /></div>
        <div className="ml-[7px] h-[12px] w-[2px] border-x border-[#7c9aa9]" />
        <div className="ml-[10px]"><Page check /></div>
        <div className="ml-[10px]"><FolderSmall /></div>
        <svg width="8" height="6" className="mt-[2px] ml-[7px]"><path d="M0 .5h8" stroke="#fff" /><path d="M1 2.500h6L4 6z" fill="#fff" /></svg>
        <div className="ml-[7px] h-[12px] w-[2px] border-x border-[#7c9aa9]" />
        <Fit w={246} className="ml-[6px]">R:\myProje\GROBONET2GEDCOM\_ROBOCZY</Fit>
        <svg width="102" height="10" className="mr-[17px] ml-auto" fill="none">
          <path d="M0 5.500h10M45.500.5h9v9h-9zM91 0l10 10M101 0L91 10" stroke="#fff" strokeWidth="1.100" />
        </svg>
      </div>
      <div className="flex h-[23px] shrink-0 items-center bg-black">
        <div className="flex h-full w-[56px] items-center justify-center bg-[#3c6478]"><Fit w={18}>File</Fit></div>
        <div className="flex h-full w-[58px] items-center justify-center border-x border-t border-[#303030] bg-[#202020]"><Fit w={30}>Home</Fit></div>
        <Fit w={29} className="ml-[15px]">Share</Fit>
        <Fit w={25} className="ml-[29px]">View</Fit>
        <svg width="10" height="6" className="ml-auto" fill="none"><path d="M1 5l4-4 4 4" stroke="#c4c4c4" strokeWidth="2" /></svg>
        <svg width="16" height="16" className="mr-[3px] ml-[9px]" viewBox="0 0 16 16">
          <circle cx="8" cy="8" r="7.300" fill="#1878d4" stroke="#d7e6f4" strokeWidth="1.300" />
          <text x="8" y="12" fontSize="11" fontWeight="700" fontFamily="Open Sans" textAnchor="middle" fill="#fff">?</text>
        </svg>
      </div>
      <Ribbon />
      <div className="flex h-[35px] shrink-0 items-center bg-[#191919] pb-[1px]">
        <svg width="94" height="16" className="ml-[12px] block" fill="none">
          <path d="M13 8H2M7 3L2 8l5 5" stroke="#fff" strokeWidth="2" />
          <path d="M31 8h11M37 3l5 5-5 5" stroke="#848484" strokeWidth="2" />
          <path d="M57.500 6l3 3 3-3" stroke="#ddd" strokeWidth="2" />
          <path d="M81 14V3M76 8l5-5 5 5" stroke="#fff" strokeWidth="2" />
        </svg>
        <div className="flex h-[22px] w-[595px] items-center border border-[#535353]">
          <div className="ml-[4px]"><FolderSmall /></div>
          <div className="ml-[8px] flex">
            {crumbs.map(([t, w, box]) => (
              <div key={t} className={`flex items-center ${box}`}>
                <svg width="4" height="7" className="mr-[9px] block shrink-0" fill="none"><path d="M.5.500L3.500 3.500.5 6.500" stroke="#a0a0a0" strokeWidth="1.400" /></svg>
                <Fit w={w}>{t}</Fit>
              </div>
            ))}
          </div>
          <svg width="10" height="6" className="ml-auto" fill="none"><path d="M1 1l4 4 4-4" stroke="#9a9a9a" strokeWidth="1.800" /></svg>
          <svg width="11" height="12" viewBox="0 0 11 12" className="mr-[2px] ml-[7px]" fill="none"><path d="M2.500 3.200A4.200 4.200 0 1 0 8 3M2 0v4h4" stroke="#9a9a9a" strokeWidth="1.500" /></svg>
        </div>
        <div className="ml-[12px] flex h-[22px] w-[202px] items-center border border-[#535353] pl-[8px] text-[#767676]">
          <Fit w={97}>Search _ROBOCZY</Fit>
          <svg width="12" height="12" className="mr-[8px] ml-auto" fill="none"><circle cx="7.500" cy="4.500" r="3.500" stroke="#a5a5a5" strokeWidth="1.600" /><path d="M5 7l-4.500 4.500" stroke="#a5a5a5" strokeWidth="2" /></svg>
        </div>
      </div>
      <div className="flex min-h-0 flex-1">
        <div className="flex w-[652px] flex-col border-r border-[#2f2f2f] text-[#dedede]">
          <div className="flex h-[25px] items-center">
            <div className="ml-[11px] h-[12px] w-[12px] border border-[#555] bg-white" />
            <Fit w={32} className="ml-[11px]">Name</Fit>
            <svg width="9" height="5" className="mb-auto ml-[71px]" fill="none"><path d="M.5 4.500l4-4 4 4" stroke="#9a9a9a" /></svg>
            <div className="mr-[59px] ml-auto flex h-full border-r border-[#636363]">
              {columns.map(([t, w, box]) => (
                <div key={t} className={`flex h-full items-center border-l border-[#636363] pl-[6px] ${box}`}>
                  <Fit w={w}>{t}</Fit>
                </div>
              ))}
            </div>
          </div>
          <div className="mt-[14px] pl-[271px] text-white"><Fit w={107}>This folder is empty.</Fit></div>
        </div>
        <div className="flex flex-1 items-center justify-center pl-[1px] text-white"><Fit w={121}>Select a file to preview.</Fit></div>
      </div>
      <div className="flex h-[23px] shrink-0 items-center bg-[#333]">
        <Fit w={39} className="ml-[14px]">0 items</Fit>
        <div className="ml-[9px] h-[12px] w-px bg-[#ddd]" />
        <div className="ml-auto flex h-full w-[22px] items-center border border-[#8a8a8a] bg-[#666] pl-[3px]">
          <svg width="16" height="13" viewBox="0 0 16 13" fill="none" className="shrink-0">
            <path d="M0 0h5v13H0z" fill="#fff" />
            <path d="M.5.500h4v12h-4zM0 4.500h5M0 8.500h5" stroke="#aaa" />
            <path d="M2 2.500h1M2 6.500h1M2 10.500h1" stroke="#357" />
            <path d="M6 2.500h4M12 2.500h4M6 6.500h4M12 6.500h4M6 10.500h4M12 10.500h4" stroke="#7c7c7c" />
          </svg>
        </div>
        <svg width="14" height="11" className="mr-[8px] ml-[4px]" fill="none">
          <path d="M.5.500h13v10H.500z" fill="#fff" stroke="#b8b8b8" />
          <path d="M2 2h10v7H2z" fill="#7db4ee" />
          <path d="M2 5l4 1 6 1v2H2z" fill="#2f6b60" />
        </svg>
      </div>
    </div>
  );
}

export default function App() {
  return (
    <div className="flex h-[1080px] w-[1920px] overflow-hidden bg-[#6f7a80]">
      <Taskbar />
      <Browser />
      <div className="h-full w-px shrink-0 bg-gradient-to-b from-[#666] via-[#4c5a62] to-[#333]" />
      <Explorer />
    </div>
  );
}
